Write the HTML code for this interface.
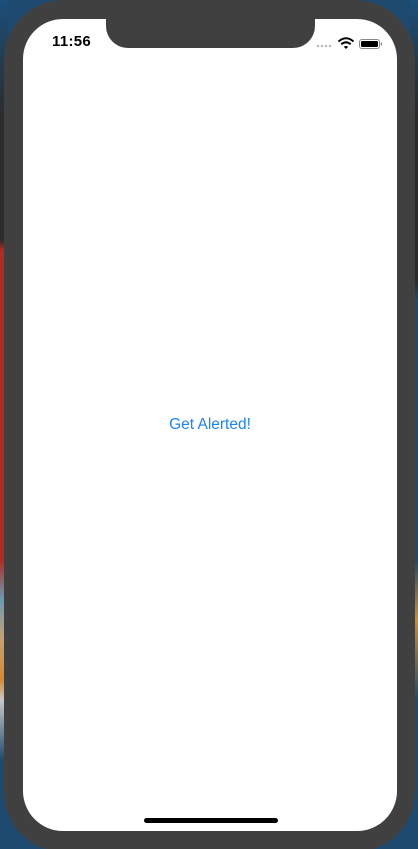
<!DOCTYPE html>
<html><head><style>
html,body{margin:0;padding:0;width:418px;height:849px;overflow:hidden;}
body{position:relative;background:#1d4a6e;}
.lside{position:absolute;left:0;top:0;width:8px;height:849px;background:linear-gradient(180deg,#1b4f7a 0,#2b2b2b 120px,#2b2b2b 240px,#b22a20 250px,#b22a20 560px,#6a9cb5 600px,#c9a070 640px,#d88a2a 680px,#c8c8c8 700px,#1d4a6e 760px);}
.rside{position:absolute;right:0;top:0;width:8px;height:849px;background:linear-gradient(180deg,#1b4f7a 0,#2b2b2b 110px,#2b2b2b 280px,#1d4a6e 300px,#1d4a6e 560px,#d08a30 620px,#1d4a6e 700px);}
.frame{position:absolute;left:4px;top:0;width:411px;height:852px;background:#404040;border-radius:60px;}
.screen{position:absolute;left:23px;top:19px;width:374px;height:812px;background:#fff;border-radius:40px;overflow:hidden;}
.notch{position:absolute;left:83px;top:-2px;width:209px;height:31px;background:#404040;border-radius:0 0 22px 22px;}
.time{position:absolute;left:29px;top:14px;font:bold 15px "Liberation Sans",sans-serif;color:#000;letter-spacing:0.3px;}
.btn{position:absolute;left:0;width:374px;top:397px;text-align:center;font:15.5px "Liberation Sans",sans-serif;color:#1a84f8;}
.home{position:absolute;left:121px;top:799px;width:134px;height:5px;border-radius:3px;background:#000;}
</style></head><body>
<div class="lside"></div><div class="rside"></div>
<div class="frame"></div>
<div class="screen">
 <div class="notch"></div>
 <div class="time">11:56</div>
 <svg style="position:absolute;left:293px;top:17px" width="80" height="14" viewBox="0 0 80 14">
  <circle cx="2" cy="10" r="1.3" fill="#bbb"/><circle cx="6" cy="10" r="1.3" fill="#bbb"/><circle cx="10" cy="10" r="1.3" fill="#bbb"/><circle cx="14" cy="10" r="1.3" fill="#bbb"/>
  <path d="M22.5 5.5 Q30 -1 37.5 5.5" stroke="#000" stroke-width="2" fill="none"/>
  <path d="M25.3 8.3 Q30 4.3 34.7 8.3" stroke="#000" stroke-width="2" fill="none"/>
  <path d="M27.8 10.8 L30 13 L32.2 10.8 Q30 9.2 27.8 10.8Z" fill="#000"/>
  <rect x="43.5" y="3.5" width="20" height="9" rx="2.5" fill="none" stroke="#888" stroke-width="1"/>
  <rect x="45" y="5" width="17" height="6" rx="1.2" fill="#000"/>
  <rect x="64.8" y="6.5" width="1.3" height="3" fill="#888"/>
 </svg>
 <div class="btn">Get Alerted!</div>
 <div class="home"></div>
</div>
</body></html>
